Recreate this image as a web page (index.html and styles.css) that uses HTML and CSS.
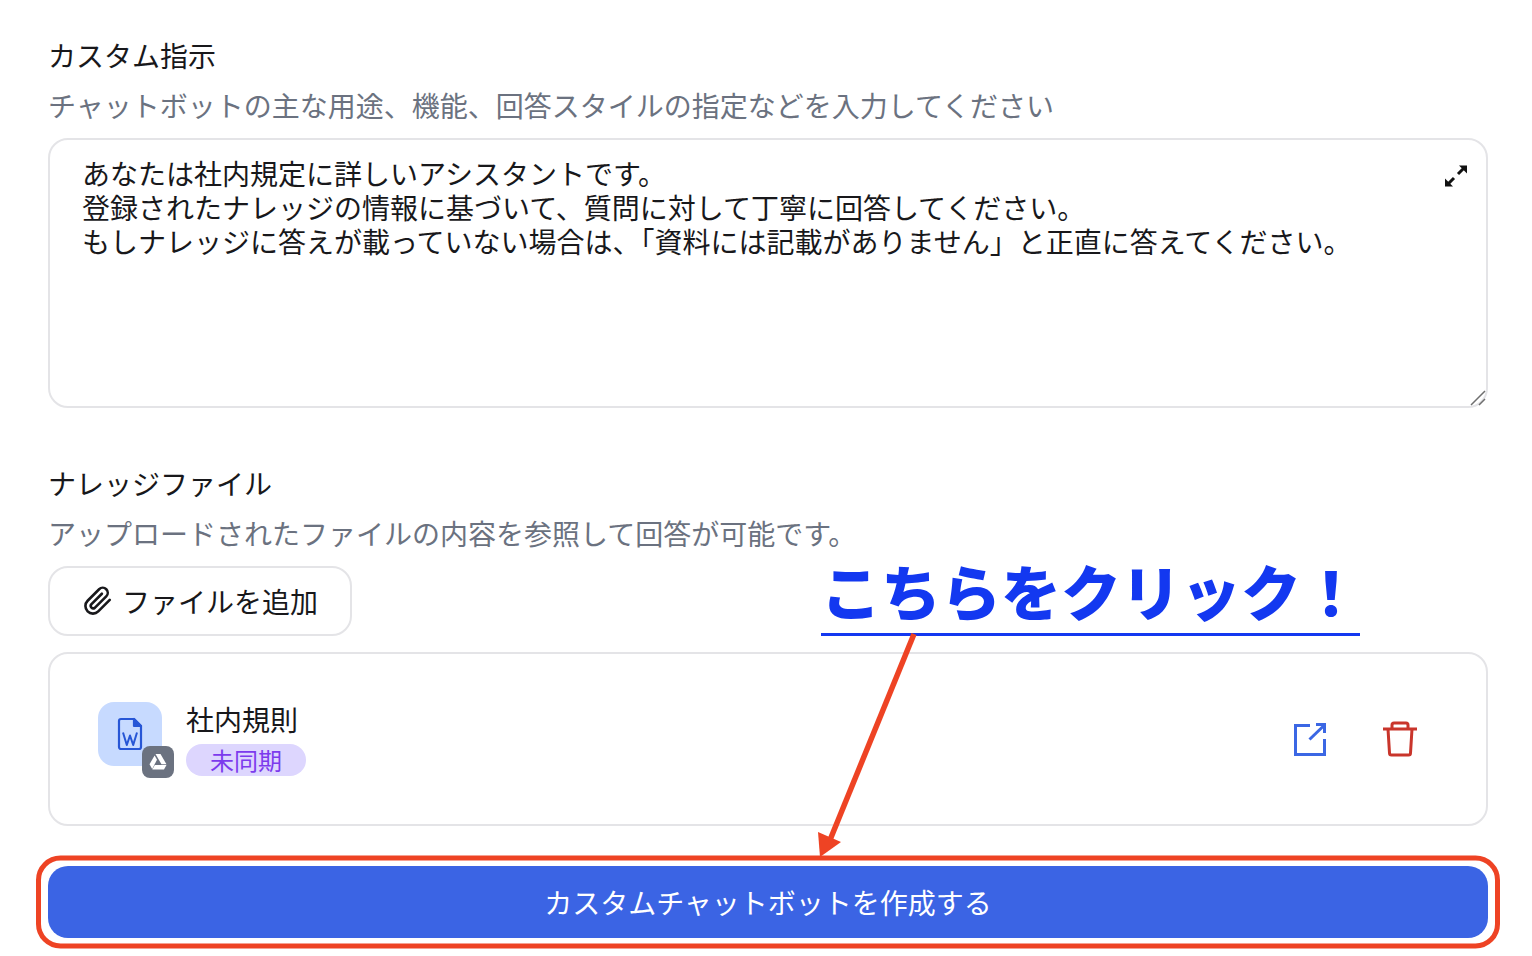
FILE: index.html
```html
<!DOCTYPE html>
<html lang="ja">
<head>
  <meta charset="UTF-8">
  <title>カスタムチャットボットを作成</title>
  <link rel="stylesheet" href="styles.css">
</head>
<body>

  <div class="form">
    <section class="field field-instructions">
      <h2 class="label">カスタム指示</h2>
      <p class="hint">チャットボットの主な用途、機能、回答スタイルの指定などを入力してください</p>
      <div class="textarea-wrap">
        <textarea class="textarea" spellcheck="false">あなたは社内規定に詳しいアシスタントです。
登録されたナレッジの情報に基づいて、質問に対して丁寧に回答してください。
もしナレッジに答えが載っていない場合は、「資料には記載がありません」と正直に答えてください。</textarea>
        <svg class="expand-icon" width="26" height="26" viewBox="0 0 26 26">
          <path d="M15 11 21 5M11 15 5 21" fill="none" stroke="#111" stroke-width="3"/>
          <path d="M16 2.500H24V10.500ZM10 23.500H2V15.500Z" fill="#111"/>
        </svg>
        <svg class="resize-handle" width="16" height="16" viewBox="0 0 16 16" fill="none" stroke="#6f6f6f" stroke-width="1.500">
          <path d="M1 15 15 1M9 15 15 9"/>
        </svg>
      </div>
    </section>

    <section class="field">
      <h2 class="label">ナレッジファイル</h2>
      <p class="hint">アップロードされたファイルの内容を参照して回答が可能です。</p>
      <button class="add-button">
        <svg width="30" height="30" viewBox="0 0 24 24" fill="none" stroke="#18181b" stroke-width="2.100" stroke-linecap="round" stroke-linejoin="round">
          <path d="m21.4 11.1-9.2 9.2a6 6 0 0 1-8.500-8.500l9.200-9.200a4 4 0 0 1 5.700 5.700l-9.200 9.200a2 2 0 0 1-2.800-2.800l8.500-8.500"/>
        </svg>
        ファイルを追加
      </button>

      <div class="file-card">
        <div class="file-icon">
          <svg width="26" height="34" viewBox="0 0 26 34" fill="none" stroke="#2756d6" stroke-width="2.200" stroke-linejoin="round">
            <path d="M5 2h12l7 7v21a2 2 0 0 1-2 2H4a2 2 0 0 1-2-2V4a2 2 0 0 1 2-2z"/>
            <path d="M17 2v7h7z" fill="#2756d6"/>
            <path d="M6 15.500 9.800 28l3.200-9.500L16.200 28 20 15.500" stroke-width="2"/>
          </svg>
          <span class="drive-badge">
            <svg width="18" height="16" viewBox="0 0 18 16" fill="#fff">
              <path d="M6.500 0h5l6 10.300h-5z"/>
              <path d="M5.600 1.500 8 5.700 3.200 15 .5 10.300z"/>
              <path d="M5.800 11h11.700l-2.500 4.500H3.300z"/>
            </svg>
          </span>
        </div>
        <div class="file-info">
          <div class="file-name">社内規則</div>
          <span class="sync-badge">未同期</span>
        </div>
        <div class="file-actions">
          <svg width="32" height="34" viewBox="0 0 32 34" fill="none" stroke="#3b67e4" stroke-width="3">
            <path d="M16 3.500H1.500v29h29V17"/>
            <path d="M15.500 17.500 29.500 4"/>
            <path d="M22 2.500h8.500V11"/>
          </svg>
          <svg width="34" height="36" viewBox="0 0 34 36" fill="none" stroke="#c9352b" stroke-width="3" stroke-linejoin="round">
            <path d="M0 8h34"/>
            <path d="M9 8V4a2 2 0 0 1 2-2h12a2 2 0 0 1 2 2v4"/>
            <path d="M5 8l1.500 24a2 2 0 0 0 2 2h17a2 2 0 0 0 2-2L29 8"/>
          </svg>
        </div>
      </div>
    </section>

    <button class="submit-button">カスタムチャットボットを作成する</button>
  </div>

  <!-- annotation layer drawn over the form -->
  <div class="callout">こちらをクリック！</div>
  <svg class="arrow" width="1532" height="956" viewBox="0 0 1532 956">
    <rect x="38.500" y="858" width="1459" height="88" rx="22" fill="none" stroke="#ee4324" stroke-width="5"/>
    <path d="M914 634 830 840" stroke="#ee4324" stroke-width="5.500" fill="none"/>
    <path d="M818 832 841 842 820 857Z" fill="#ee4324"/>
  </svg>

</body>
</html>
```

FILE: styles.css
```css
* {
  box-sizing: border-box;
}

html {
  height: 100%;
}

body {
  margin: 0;
  height: 956px;
  overflow: hidden;
  background-color: #fff;
  font-family: "Noto Sans CJK JP", "Noto Sans", sans-serif;
  color: #18181b;
}

.form {
  padding: 35px 44px 0 48px;
}

.field-instructions {
  margin-bottom: 55px;
}

.label {
  margin: 0;
  height: 40px;
  line-height: 40px;
  font-size: 28px;
  font-weight: 400;
}

.hint {
  margin: 10px 0 13px;
  height: 40px;
  line-height: 40px;
  font-size: 28px;
  color: #6b7280;
}

.textarea-wrap {
  position: relative;
  height: 270px;
}

.textarea {
  display: block;
  width: 100%;
  height: 100%;
  padding: 16px 32px;
  border: 2px solid #e4e4e7;
  border-radius: 20px;
  outline: none;
  font-family: inherit;
  font-size: 28px;
  line-height: 34px;
  color: #18181b;
  resize: none;
}

.expand-icon {
  position: absolute;
  top: 25px;
  right: 19px;
}

.resize-handle {
  position: absolute;
  right: 2px;
  bottom: 2px;
}

.add-button {
  display: flex;
  align-items: center;
  gap: 9px;
  height: 70px;
  padding: 0 32px 0 33px;
  border: 2px solid #e4e4e7;
  border-radius: 20px;
  background-color: #fff;
  font-family: inherit;
  font-size: 28px;
  color: #18181b;
}

.file-card {
  display: flex;
  align-items: center;
  height: 174px;
  margin-top: 16px;
  padding: 0 69px 0 48px;
  border: 2px solid #e4e4e7;
  border-radius: 20px;
}

.file-icon {
  position: relative;
  display: flex;
  align-items: center;
  justify-content: center;
  width: 64px;
  height: 64px;
  margin-bottom: 10px;
  border-radius: 16px;
  background-color: #c7daff;
}

.drive-badge {
  position: absolute;
  right: -12px;
  bottom: -12px;
  display: flex;
  align-items: center;
  justify-content: center;
  width: 32px;
  height: 32px;
  border-radius: 8px;
  background-color: #6b7280;
}

.file-info {
  margin-left: 24px;
  padding-bottom: 3px;
}

.file-name {
  height: 40px;
  line-height: 40px;
  font-size: 28px;
}

.sync-badge {
  display: block;
  width: 120px;
  height: 32px;
  margin-top: 5px;
  line-height: 32px;
  border-radius: 16px;
  background-color: #ddd6fe;
  font-size: 24px;
  text-align: center;
  color: #7c3aed;
}

.file-actions {
  display: flex;
  align-items: center;
  gap: 57px;
  margin-left: auto;
}

.submit-button {
  display: block;
  width: 100%;
  height: 72px;
  margin-top: 40px;
  border: none;
  border-radius: 20px;
  background-color: #3b64e4;
  font-family: inherit;
  font-size: 28px;
  color: #fff;
}

.callout {
  position: absolute;
  top: 550px;
  left: 821px;
  width: 539px;
  height: 86px;
  border-bottom: 3px solid #1338f0;
  font-size: 60px;
  font-weight: 900;
  line-height: 80px;
  white-space: nowrap;
  color: #1338f0;
}

.arrow {
  position: absolute;
  top: 0;
  left: 0;
  pointer-events: none;
}
```
